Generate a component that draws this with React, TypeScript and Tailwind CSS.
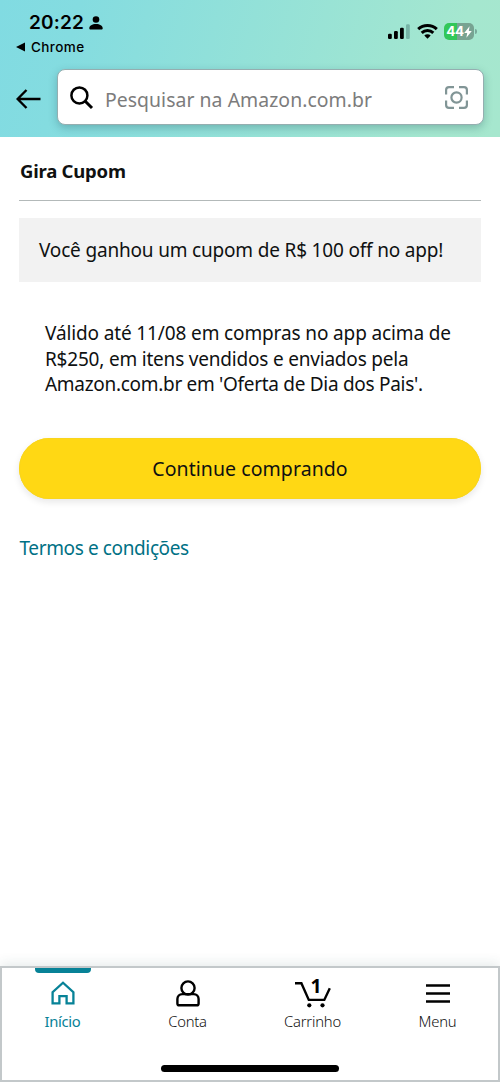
import React from 'react';

function StatusBar() {
  return (
    <div className="flex h-[60px] justify-between font-['Inter',sans-serif] text-black">
      <div className="pl-4 pt-[11px]">
        <div className="flex h-6 items-center gap-[5px] pl-[13px]">
          <span className="text-[19px] leading-6 font-semibold tracking-[0.2px]">20:22</span>
          <svg width="14" height="14" viewBox="0 0 14 14">
            <circle cx="7" cy="3.5" r="3.3" />
            <path d="M.3 12.2C.3 9.8 3.2 8 7 8s6.7 1.8 6.7 4.2c0 1-.5 1.4-1.5 1.4H1.8C.8 13.600.3 13.2.3 12.2z" />
          </svg>
        </div>
        <div className="mt-[2px] flex h-5 items-center gap-[5px]">
          <svg width="10" height="10" viewBox="0 0 10 10">
            <path d="M0 5 9 .5v9z" />
          </svg>
          <span className="text-[13.5px] leading-5 font-medium tracking-[0.4px]">Chrome</span>
        </div>
      </div>
      <div className="flex items-start pt-[23px] pr-[23px]">
        <svg width="22" height="17" viewBox="0 0 22 17">
          <rect x="0" y="10.7" width="3.8" height="5.2" rx="1.2" />
          <rect x="6" y="8" width="3.8" height="7.9" rx="1.2" />
          <rect x="12" y="4.7" width="3.8" height="11.2" rx="1.2" />
          <rect x="18" y="1.2" width="3.8" height="14.7" rx="1.2" fill="#76b3a5" />
        </svg>
        <svg className="ml-[7px]" width="21" height="17" viewBox="0 0 21 17" fill="none" stroke="#000" strokeWidth="3">
          <path d="M1.2 6.1a13.5 13.5 0 0 1 18.6 0" />
          <path d="M4.7 9.8a8.5 8.5 0 0 1 11.6 0" />
          <path d="M10.5 15.8 7.3 12.5a4.6 4.6 0 0 1 6.4 0z" fill="#000" stroke="none" />
        </svg>
        <div className="ml-[6px] flex h-[17px] w-[30px] items-center justify-center rounded-[5px] bg-[linear-gradient(90deg,#32c759_44%,#78a392_44%)] text-white">
          <span className="text-[13.5px] leading-none font-bold tracking-[-0.3px]">44</span>
          <svg width="8" height="12" viewBox="0 0 8 12" fill="#fff">
            <path d="M5.6.2.2 6.9h3L2.400 11.800 7.800 4.900H4.800z" />
          </svg>
        </div>
        <div className="mt-[6px] ml-px h-[5px] w-[2px] rounded-r-full bg-[#78a99a]" />
      </div>
    </div>
  );
}

function SearchRow() {
  return (
    <div className="flex items-center pt-[9px] pr-4 pl-4">
      <svg className="mt-[3px]" width="25" height="20" viewBox="0 0 25 20" fill="none" stroke="#000" strokeWidth="2.4">
        <path d="M24.5 10H2M10.5 1 1.6 10l8.9 9" />
      </svg>
      <div className="ml-4 flex h-14 w-[427px] items-center rounded-lg border border-[#95aeb0] bg-white shadow-[0_3px_9px_rgba(20,70,80,0.28)]">
        <svg className="mt-[2px] ml-3" width="24" height="24" viewBox="0 0 24 24" fill="none" stroke="#000" strokeWidth="2.5">
          <circle cx="9.4" cy="9.4" r="8" />
          <path d="m15 15 7 7" strokeWidth="3" />
        </svg>
        <span className="ml-[11px] pt-[5px] text-[19.4px] leading-6 tracking-[0.05px] whitespace-nowrap text-[#7c7c7c]">
          Pesquisar na Amazon.com.br
        </span>
        <svg className="mr-[15px] ml-auto" width="23" height="23" viewBox="0 0 23 23" fill="none" stroke="#819596" strokeWidth="2.2">
          <path d="M1.1 8.5V4A2.9 2.9 0 0 1 4 1.1h5M14 1.1h5A2.9 2.9 0 0 1 21.9 4v4.500M21.9 14.5V19a2.9 2.9 0 0 1-2.9 2.9h-5M9 21.9H4A2.9 2.9 0 0 1 1.1 19v-4.5" />
          <circle cx="11.5" cy="11.5" r="5.1" />
        </svg>
      </div>
    </div>
  );
}

const paragraph = [
  ['Válido até 11/08 em compras no app acima de', 'tracking-[-0.13px]'],
  ['R$250, em itens vendidos e enviados pela', 'tracking-[-0.2px]'],
  ["Amazon.com.br em 'Oferta de Dia dos Pais'.", 'tracking-[-0.3px]'],
];

function Content() {
  return (
    <main className="flex flex-1 flex-col px-[19px] text-[#0f1111]">
      <h1 className="h-16 border-b border-[#b3b9b9] pt-[22px] pl-px text-[18.5px] leading-6 font-bold">
        <span className="tracking-[-0.22px]">Gira Cupom</span>
      </h1>
      <div className="mt-[17px] flex h-16 items-center bg-[#f2f2f2] pl-5 text-[19px] whitespace-nowrap">
        <span className="tracking-[-0.18px]">Você ganhou um cupom de R$ 100 off no app!</span>
      </div>
      <div className="mt-[39px] pl-[26px] text-[19px] leading-[25.6px] whitespace-nowrap">
        {paragraph.map(([line, spacing]) => (
          <div key={line}>
            <span className={spacing}>{line}</span>
          </div>
        ))}
      </div>
      <button className="mt-[40px] h-[61px] rounded-full bg-[#ffd814] pt-px text-[19.5px] shadow-[0_3px_7px_rgba(15,17,17,0.1),inset_0_0_0_1px_#f9d51c]">
        <span className="tracking-[0.06px]">Continue comprando</span>
      </button>
      <a className="mt-[37px] pl-[0.5px] text-[19px] leading-6 text-[#007185]">
        <span className="tracking-[-0.38px]">Termos e condições</span>
      </a>
    </main>
  );
}

function HomeIcon() {
  return (
    <svg width="24" height="24" viewBox="0 0 24 24" fill="none" stroke="#078297" strokeWidth="2.3">
      <path d="M1.6 22.3V11.2L12 1.7l10.4 9.5v11.1h-6.8v-7.1H8.4v7.1z" />
    </svg>
  );
}

function AccountIcon() {
  return (
    <svg width="24" height="27" viewBox="0 0 24 27" fill="none" stroke="#000" strokeWidth="2.4">
      <circle cx="12" cy="8" r="6.6" />
      <path d="M7 14.1h-.6c-3 0-5 2.1-5 5v4.3c0 1.3.6 1.9 1.8 1.9h17.6c1.2 0 1.8-.6 1.8-1.9v-4.3c0-2.9-2-5-5-5H7z" />
    </svg>
  );
}

function CartIcon() {
  return (
    <div className="relative h-[30px] w-9">
      <svg width="36" height="30" viewBox="0 0 36 30" fill="none" stroke="#000" strokeWidth="2.4">
        <path d="M0 5.2h6.4l7.4 16.7h15.5l5.5-11.7" />
        <circle cx="14.3" cy="27.3" r="2.1" fill="#000" stroke="none" />
        <circle cx="27.5" cy="27.3" r="2.1" fill="#000" stroke="none" />
      </svg>
      <span className="absolute top-[-2px] left-[16px] text-[19.5px] leading-5 font-bold text-black">1</span>
    </div>
  );
}

function MenuIcon() {
  return (
    <svg width="24" height="19" viewBox="0 0 24 19" stroke="#000" strokeWidth="2.4">
      <path d="M0 1.5h24M0 9.5h24M0 17.5h24" />
    </svg>
  );
}

function NavItem({ icon, label, active }: { icon: React.ReactNode; label: string; active?: boolean }) {
  return (
    <div className="flex w-[125px] flex-col items-center">
      <div className={active ? 'h-[5px] w-14 rounded-b-[4px] bg-[#078297]' : 'h-[5px]'} />
      <div className="mt-[4px] flex h-8 items-center justify-center">{icon}</div>
      <span className={active ? 'mt-[2px] text-[14.8px] leading-5 tracking-[-0.35px] text-[#078297]' : 'mt-[2px] text-[14.8px] leading-5 font-light tracking-[-0.2px] text-[#111]'}>
        {label}
      </span>
    </div>
  );
}

export default function App() {
  return (
    <div className="flex h-[1082px] w-[500px] flex-col overflow-hidden bg-white font-['Noto_Sans',sans-serif]">
      <header className="h-[137px] bg-[linear-gradient(105deg,#81dbe2_0%,#84dce0_15%,#a5e7cf_88%,#a6e7ce_100%)]">
        <StatusBar />
        <SearchRow />
      </header>
      <Content />
      <nav className="flex h-[116px] flex-col border-2 border-[#c3c8ca] shadow-[0_-2px_12px_rgba(30,70,70,0.12)]">
        <div className="-mx-[2px] flex">
          <NavItem icon={<HomeIcon />} label="Início" active />
          <NavItem icon={<AccountIcon />} label="Conta" />
          <NavItem icon={<CartIcon />} label="Carrinho" />
          <NavItem icon={<MenuIcon />} label="Menu" />
        </div>
        <div className="mx-auto mt-auto mb-[8px] h-[7px] w-[178px] rounded-full bg-black" />
      </nav>
    </div>
  );
}
